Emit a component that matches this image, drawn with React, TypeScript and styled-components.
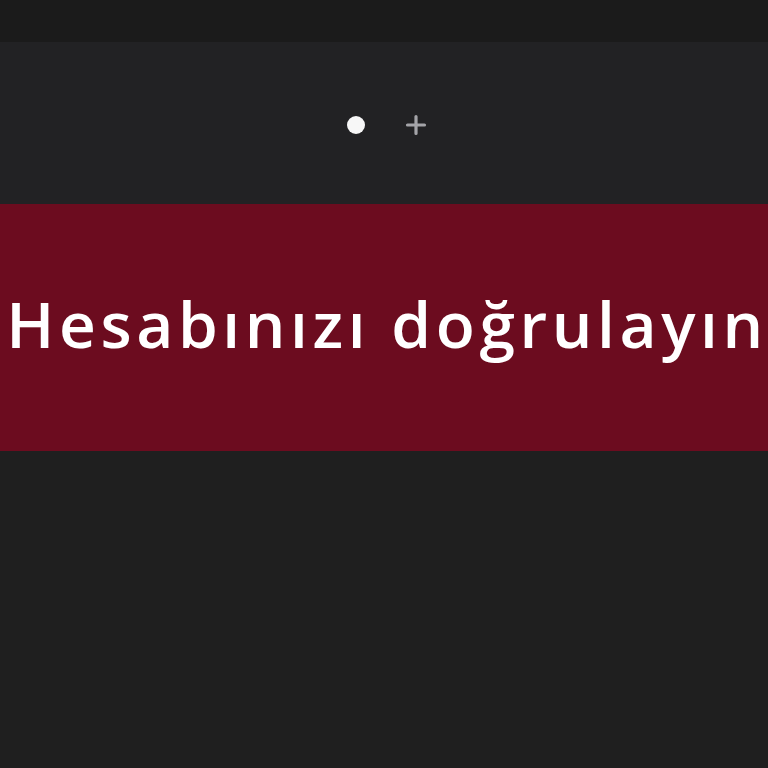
import styled, { createGlobalStyle } from "styled-components";

const GlobalStyle = createGlobalStyle`
  html, body {
    margin: 0;
    padding: 0;
    background: #1f1f1f;
    font-family: "Open Sans", "Noto Sans", sans-serif;
  }
`;

const Page = styled.div`
  display: flex;
  flex-direction: column;
  width: 768px;
  height: 768px;
  overflow: hidden;
  background: #1f1f1f;
`;

const TopBar = styled.div`
  height: 42px;
  background: #1b1b1b;
`;

const Steps = styled.div`
  height: 162px;
  background: #222224;
  display: flex;
  align-items: center;
  justify-content: center;
  gap: 40px;
  padding: 4px 0 0 5px;
  box-sizing: border-box;
`;

const Dot = styled.span`
  display: block;
  width: 18px;
  height: 18px;
  border-radius: 50%;
  background: #f7f7f7;
`;

const AddButton = styled.button`
  display: flex;
  align-items: center;
  justify-content: center;
  width: 22px;
  height: 22px;
  padding: 0;
  border: 0;
  background: transparent;
  color: #a4a4a8;
  cursor: pointer;
`;

const Banner = styled.div`
  height: 247px;
  background: #6c0c1f;
  display: flex;
  align-items: center;
  justify-content: center;
  overflow: hidden;
`;

const Title = styled.h1`
  margin: 0;
  padding: 0 0 8px 6px;
  white-space: nowrap;
  color: #ffffff;
  font-family: "Open Sans", "Noto Sans", sans-serif;
  font-weight: 600;
  font-size: 64px;
  letter-spacing: 4.6px;
`;

const Body = styled.div`
  flex: 1;
  background: #1f1f1f;
`;

export default function App() {
  return (
    <>
      <GlobalStyle />
      <Page>
        <TopBar />
        <Steps>
          <Dot />
          <AddButton aria-label="Ekle">
            <svg width="22" height="22" viewBox="0 0 22 22">
              <path
                d="M11 2.5v17M2.5 11h17"
                stroke="currentColor"
                strokeWidth="3.2"
                strokeLinecap="round"
              />
            </svg>
          </AddButton>
        </Steps>
        <Banner>
          <Title>Hesabınızı doğrulayın</Title>
        </Banner>
        <Body />
      </Page>
    </>
  );
}
